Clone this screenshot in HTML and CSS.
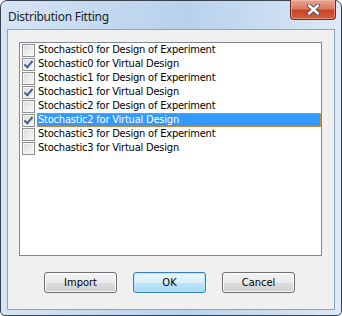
FILE: index.html
```html
<!DOCTYPE html>
<html lang="en">
<head>
    <meta charset="UTF-8">
    <title>Distribution Fitting</title>
    <link rel="stylesheet" href="styles.css">
</head>
<body>
    <div class="window">
        <div class="titlebar">
            <div class="title">Distribution Fitting</div>
            <div class="close-btn">
                <svg width="17" height="11" viewBox="0 0 17 11">
                    <path d="M4 1.5 L13 9.5 M13 1.5 L4 9.5" stroke="#4a4a4a" stroke-width="4.2" stroke-linecap="round" fill="none"/>
                    <path d="M4 1.5 L13 9.5 M13 1.5 L4 9.5" stroke="#ffffff" stroke-width="2.4" stroke-linecap="round" fill="none"/>
                </svg>
            </div>
        </div>
        <div class="client">
            <div class="listbox">
                <div class="row"><span class="check"></span><span class="text">Stochastic0 for Design of Experiment</span></div>
                <div class="row"><span class="check checked"></span><span class="text">Stochastic0 for Virtual Design</span></div>
                <div class="row"><span class="check"></span><span class="text">Stochastic1 for Design of Experiment</span></div>
                <div class="row"><span class="check checked"></span><span class="text">Stochastic1 for Virtual Design</span></div>
                <div class="row"><span class="check"></span><span class="text">Stochastic2 for Design of Experiment</span></div>
                <div class="row selected"><span class="check checked"></span><span class="text">Stochastic2 for Virtual Design</span></div>
                <div class="row"><span class="check"></span><span class="text">Stochastic3 for Design of Experiment</span></div>
                <div class="row"><span class="check"></span><span class="text">Stochastic3 for Virtual Design</span></div>
            </div>
            <div class="buttons">
                <div class="button">Import</div>
                <div class="button default">OK</div>
                <div class="button">Cancel</div>
            </div>
        </div>
    </div>
</body>
</html>
```

FILE: styles.css
```css
body {
    margin: 0;
    background-color: #ffffff;
    font-family: "DejaVu Sans Condensed", "DejaVu Sans", sans-serif;
}
.window {
    width: 342px;
    height: 316px;
    box-sizing: border-box;
    border: 1px solid #39434f;
    border-radius: 7px 7px 5px 5px;
    background: linear-gradient(to right, #d6e5f5 0%, #c0d7ef 35%, #b8d2ed 55%, #cbddf1 80%, #dde9f6 100%);
    padding: 0 6px 5px 6px;
    display: flex;
    flex-direction: column;
}
.titlebar {
    height: 28px;
    display: flex;
    justify-content: space-between;
    align-items: flex-start;
}
.title {
    font-family: "Noto Sans", sans-serif;
    font-size: 12px;
    letter-spacing: -0.25px;
    color: #1e1e1e;
    padding: 7px 0 0 1px;
}
.close-btn {
    width: 44px;
    height: 19px;
    margin-top: -1px;
    margin-right: -1px;
    border: 1px solid #6b2b22;
    border-top: none;
    border-radius: 0 0 4px 4px;
    background: linear-gradient(to bottom, #e7a592 0%, #dc7a63 45%, #c94329 55%, #d4603f 100%);
    box-shadow: inset 0 0 0 1px rgba(255, 200, 180, 0.5);
    display: flex;
    align-items: center;
    justify-content: center;
}
.client {
    flex: 1;
    border: 1px solid #8ea3bb;
    background-color: #f0f0f0;
    padding: 12px 12px 0 11px;
}
.listbox {
    height: 212px;
    border: 1px solid #828790;
    background-color: #ffffff;
    padding-left: 2px;
}
.row {
    height: 14px;
    display: flex;
    align-items: flex-start;
    font-size: 11px;
    line-height: 14px;
    color: #000000;
}
.check {
    width: 11px;
    height: 11px;
    margin-top: 1px;
    border: 1px solid #8f8f8f;
    background: linear-gradient(135deg, #d6d8db 0%, #eeeeee 60%, #fafafa 100%);
    box-shadow: inset 0 0 0 1px #f7f7f7;
    flex-shrink: 0;
    position: relative;
}
.check.checked::after {
    content: "";
    position: absolute;
    left: 3px;
    top: 0px;
    width: 3px;
    height: 7px;
    border-right: 2px solid #47609a;
    border-bottom: 2px solid #47609a;
    transform: rotate(40deg);
}
.text {
    flex: 1;
    margin-left: 2px;
    padding-left: 1px;
    letter-spacing: -0.2px;
    white-space: nowrap;
}
.selected .text {
    background-color: #3399ff;
    color: #ffffff;
    outline: 1px dotted #d49a50;
    outline-offset: -1px;
}
.buttons {
    display: flex;
    margin-top: 16px;
    padding-left: 25px;
    gap: 16px;
}
.button {
    width: 71px;
    height: 19px;
    border: 1px solid #707070;
    border-radius: 3px;
    background: linear-gradient(to bottom, #f2f2f2 0%, #ebebeb 50%, #dddddd 51%, #cfcfcf 100%);
    box-shadow: inset 0 0 0 1px #fbfbfb;
    font-size: 11px;
    line-height: 19px;
    text-align: center;
    color: #000000;
}
.button.default {
    border-color: #3c7fb1;
    box-shadow: inset 0 0 0 1px #b9e4f8;
    background: linear-gradient(to bottom, #eaf6fd 0%, #d9f0fc 50%, #bee6fd 51%, #a7d9f5 100%);
}
```
